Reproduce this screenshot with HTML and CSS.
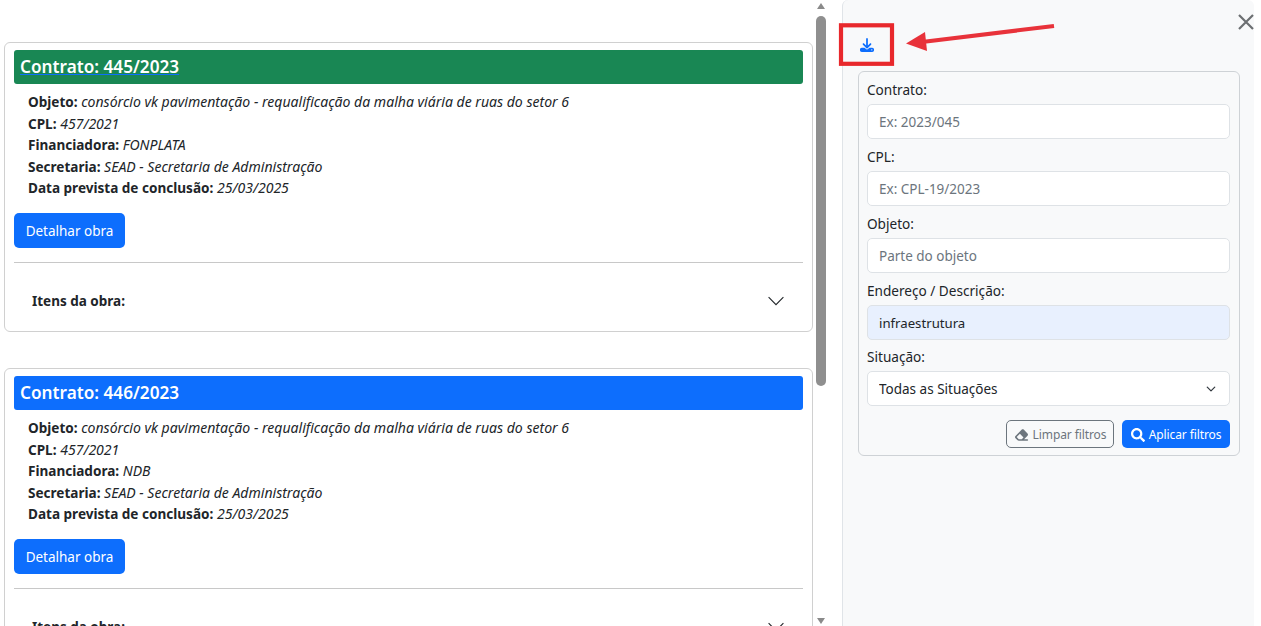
FILE: index.html
```html
<!DOCTYPE html>
<html lang="pt-BR">
<head>
<meta charset="utf-8">
<title>Obras</title>
<link rel="stylesheet" href="styles.css">
</head>
<body>
<div class="page">
  <main class="list">
    <article class="card">
      <h2 class="title green"><a href="#" class="title-link">Contrato: 445/2023</a></h2>
      <div class="info">
        <div class="row"><b>Objeto:</b> <i>consórcio vk pavimentação - requalificação da malha viária de ruas do setor 6</i></div>
        <div class="row"><b>CPL:</b> <i>457/2021</i></div>
        <div class="row"><b>Financiadora:</b> <i>FONPLATA</i></div>
        <div class="row"><b>Secretaria:</b> <i>SEAD - Secretaria de Administração</i></div>
        <div class="row"><b>Data prevista de conclusão:</b> <i>25/03/2025</i></div>
      </div>
      <button class="btn primary detail">Detalhar obra</button>
      <hr class="rule">
      <div class="accordion"><b>Itens da obra:</b>
        <svg class="chev" viewBox="0 0 16 16" width="16" height="16"><path fill="none" stroke="#212529" stroke-width="1.1" d="M.6 4.2 8 11.6l7.4-7.4"/></svg>
      </div>
    </article>
    <article class="card">
      <h2 class="title blue">Contrato: 446/2023</h2>
      <div class="info">
        <div class="row"><b>Objeto:</b> <i>consórcio vk pavimentação - requalificação da malha viária de ruas do setor 6</i></div>
        <div class="row"><b>CPL:</b> <i>457/2021</i></div>
        <div class="row"><b>Financiadora:</b> <i>NDB</i></div>
        <div class="row"><b>Secretaria:</b> <i>SEAD - Secretaria de Administração</i></div>
        <div class="row"><b>Data prevista de conclusão:</b> <i>25/03/2025</i></div>
      </div>
      <button class="btn primary detail">Detalhar obra</button>
      <hr class="rule">
      <div class="accordion"><b>Itens da obra:</b>
        <svg class="chev" viewBox="0 0 16 16" width="16" height="16"><path fill="none" stroke="#212529" stroke-width="1.1" d="M.6 4.2 8 11.6l7.4-7.4"/></svg>
      </div>
    </article>
  </main>
  <div class="scrollbar">
    <span class="arrow-up"></span>
    <span class="thumb"></span>
    <span class="arrow-down"></span>
  </div>
  <aside class="panel">
    <button class="close" aria-label="Fechar">
      <svg viewBox="0 0 16 16" width="16" height="16"><path fill="none" stroke="#6c6f72" stroke-width="2.2" d="M1 1l14 14M15 1 1 15"/></svg>
    </button>
    <div class="download">
      <svg viewBox="0 0 512 512" width="14" height="14"><path fill="#0d6efd" d="M288 32c0-17.7-14.3-32-32-32s-32 14.3-32 32V274.7l-73.4-73.4c-12.5-12.5-32.8-12.5-45.3 0s-12.5 32.8 0 45.3l128 128c12.5 12.5 32.8 12.5 45.3 0l128-128c12.5-12.5 12.5-32.8 0-45.3s-32.8-12.5-45.3 0L288 274.7V32zM64 352c-35.3 0-64 28.7-64 64v32c0 35.3 28.7 64 64 64H448c35.3 0 64-28.7 64-64V416c0-35.3-28.7-64-64-64H346.5l-45.3 45.3c-25 25-65.5 25-90.5 0L165.5 352H64zm368 56a24 24 0 1 1 0 48 24 24 0 1 1 0-48z"/></svg>
    </div>
    <form class="filters">
      <label class="label">Contrato:</label>
      <input class="field" placeholder="Ex: 2023/045">
      <label class="label">CPL:</label>
      <input class="field" placeholder="Ex: CPL-19/2023">
      <label class="label">Objeto:</label>
      <input class="field" placeholder="Parte do objeto">
      <label class="label">Endereço / Descrição:</label>
      <input class="field filled" value="infraestrutura">
      <label class="label">Situação:</label>
      <select class="field select"><option>Todas as Situações</option></select>
      <div class="actions">
        <button type="button" class="btn small outline">
          <svg viewBox="0 0 576 512" width="15" height="14"><path fill="#6c757d" d="M290.7 57.4L57.4 290.7c-25 25-25 65.5 0 90.5l80 80c12 12 28.3 18.7 45.3 18.7H288h9.4H512c17.7 0 32-14.3 32-32s-14.3-32-32-32H387.9L518.6 285.3c25-25 25-65.5 0-90.5L381.3 57.4c-25-25-65.5-25-90.5 0zM297.4 416H288l-105.4 0-80-80L227.3 211.3 364.7 348.7 297.4 416z"/></svg>
          Limpar filtros</button>
        <button type="button" class="btn small primary">
          <svg viewBox="0 0 512 512" width="14" height="14"><path fill="#fff" d="M505 442.7L405.3 343c-4.5-4.5-10.6-7-17-7H372c27.6-35.3 44-79.7 44-128C416 93.1 322.9 0 208 0S0 93.1 0 208s93.1 208 208 208c48.3 0 92.7-16.4 128-44v16.3c0 6.4 2.5 12.5 7 17l99.7 99.7c9.4 9.4 24.6 9.4 33.9 0l28.3-28.3c9.4-9.4 9.4-24.6.1-34zM208 336c-70.7 0-128-57.2-128-128 0-70.7 57.2-128 128-128 70.7 0 128 57.2 128 128 0 70.7-57.2 128-128 128z"/></svg>
          Aplicar filtros</button>
      </div>
    </form>
  </aside>
  <svg class="annotation" width="1261" height="626" viewBox="0 0 1261 626">
    <rect x="841" y="25.3" width="51" height="38.5" fill="none" stroke="#e8282c" stroke-width="4.2"/>
    <path d="M1054 26 922 42" stroke="#e8323a" stroke-width="4" fill="none"/>
    <path d="M906 43.5 925 32l2 19z" fill="#e8323a"/>
  </svg>
</div>
</body>
</html>
```
FILE: styles.css
```css
* { box-sizing: border-box; }
html, body { margin: 0; height: 626px; overflow: hidden; background: #fff; }
body { font-family: "Noto Sans", "Open Sans", sans-serif; font-size: 13.5px; line-height: 21.6px; color: #212529; }
.page { display: flex; height: 626px; overflow: hidden; position: relative; }

.list { width: 813px; flex: none; padding: 42px 0 0 4px; display: flex; flex-direction: column; gap: 36px; overflow: hidden; }
.card { flex: none; height: 290px; border: 1px solid #d0d0d0; border-radius: 6px; padding: 7px 9px 0; background: #fff; }
.title { margin: 0; height: 34px; padding: 0 6px; border-radius: 3px; color: #fff; font-size: 17.2px; font-weight: 600; line-height: 33px; }
.green { background: #198754; }
.blue { background: #0d6efd; }
.title-link { color: #fff; text-decoration: underline; text-decoration-color: #0d6efd; }
.info { padding: 7px 14px 0; height: 122px; font-size: 14.05px; }
.row { height: 21.6px; }
.info b { font-weight: 700; font-size: 13.55px; }
.btn { font: inherit; border-radius: 5px; border: 1px solid transparent; display: inline-flex; align-items: center; justify-content: center; }
.primary { background: #0d6efd; color: #fff; }
.detail { width: 111px; height: 35px; margin-top: 7px; padding: 2px 0 0; display: flex; }
.rule { margin: 14px 0 0; border: 0; border-top: 1px solid #c8c8c8; }
.accordion { height: 68px; display: flex; align-items: center; justify-content: space-between; padding: 8px 19px 0 18px; color: #212529; font-size: 13.5px; }
.accordion b { position: relative; top: 1px; }
.chev { display: block; }

.scrollbar { flex: none; width: 14px; margin-left: 1px; display: flex; flex-direction: column; align-items: center; height: 626px; }
.arrow-up { width: 0; height: 0; margin-top: 3px; border: 4.5px solid transparent; border-top: 0; border-bottom: 6px solid #8a8a8a; }
.thumb { width: 10px; height: 370px; margin-top: 7px; background: #8f8f8f; border-radius: 5px; }
.arrow-down { width: 0; height: 0; margin-top: auto; margin-bottom: 2px; border: 4.5px solid transparent; border-bottom: 0; border-top: 6px solid #8a8a8a; }

.panel { position: relative; flex: none; width: 412px; margin-left: 14px; height: 626px; background: #f8f9fa; border-left: 1px solid #e0e4e8; border-top-left-radius: 6px; border-top-right-radius: 6px; padding: 24px 14px 0 15px; overflow: hidden; }
.close { position: absolute; top: 14px; right: 0; padding: 0; border: 0; background: none; line-height: 0; }
.download { height: 47px; padding: 14px 0 0; width: 18px; display: flex; justify-content: center; align-items: flex-start; }
.filters { width: 382px; height: 385px; border: 1px solid #ced2d6; border-radius: 6px; padding: 8.2px 9px 0 8px; display: flex; flex-direction: column; background: #f8f9fa; }
.label { height: 24px; line-height: 19px; font-size: 13.6px; }
.field { width: 100%; height: 35px; flex: none; margin-bottom: 7.8px; border: 1px solid #dee2e6; border-radius: 5px; padding: 1px 11px 0; font: inherit; font-size: 13.5px; color: #212529; background: #fff; }
.field::placeholder { color: #6c757d; opacity: 1; }
.filled { background: #e8f0fe; font-size: 13.2px; }
.select { appearance: none; -webkit-appearance: none; background: #fff url("data:image/svg+xml,%3csvg xmlns='http://www.w3.org/2000/svg' viewBox='0 0 16 16'%3e%3cpath fill='none' stroke='%23343a40' stroke-linecap='round' stroke-linejoin='round' stroke-width='2' d='m2 5 6 6 6-6'/%3e%3c/svg%3e") no-repeat right 12px center / 12px 10px; }
.actions { display: flex; justify-content: flex-end; gap: 8px; margin-top: 6px; }
.small { height: 28px; width: 108px; font-size: 12px; letter-spacing: -.1px; gap: 4px; padding: 1px 0 0; white-space: nowrap; }
.outline { border-color: #6c757d; color: #6c757d; background: transparent; }

.annotation { position: absolute; left: 0; top: 0; pointer-events: none; }
```
